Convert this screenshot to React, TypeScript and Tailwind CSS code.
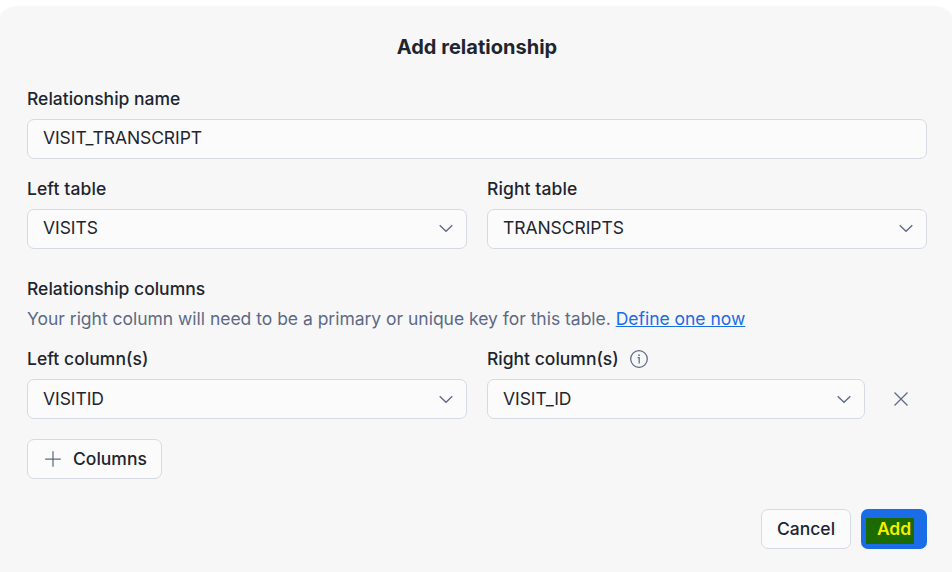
import type { ReactNode } from "react";

function Chevron() {
  return (
    <svg width="20" height="20" viewBox="0 0 20 20" fill="none" stroke="#5d6a85" strokeWidth="1.3" className="shrink-0">
      <path d="M3.7 6.2 10 12.3 16.3 6.2" />
    </svg>
  );
}

function Label({ children }: { children: ReactNode }) {
  return <div className="flex h-5 items-center font-medium whitespace-nowrap">{children}</div>;
}

function Select({ value, low = false }: { value: string; low?: boolean }) {
  return (
    <button className="flex h-10 w-full items-center justify-between rounded-[7px] border border-[#d5dae4] bg-[#fbfbfb] pr-[10px] pl-[15px] text-left tracking-[-0.06px]">
      <span className={low ? "" : "pb-[2px]"}>{value}</span>
      <span className={low ? "pt-[1px]" : "pb-[1px]"}>
        <Chevron />
      </span>
    </button>
  );
}

export default function App() {
  return (
    <div className="h-[572px] w-[952px] overflow-hidden bg-white pt-[6px] font-['Inter',sans-serif] text-[17.5px] leading-5 text-[#1e252f]">
      <div className="-mx-[3px] h-[566px] rounded-t-[20px] bg-[#f7f7f7] pt-[28px] pr-[28px] pl-[30px]">
        <h1 className="h-[26px] text-center text-[20px] leading-[26px] font-bold tracking-[0.02px]">Add relationship</h1>

        <div className="mt-[29px]">
          <Label>Relationship name</Label>
          <div className="mt-[10px] flex h-10 items-center rounded-[7px] border border-[#d5dae4] bg-[#fbfbfb] px-[15px] pb-[2px] tracking-[-0.08px]">
            VISIT_TRANSCRIPT
          </div>
        </div>

        <div className="mt-5 grid grid-cols-2 gap-5">
          <div className="flex flex-col gap-[10px]">
            <Label>
              <span className="tracking-[0.1px]">Left table</span>
            </Label>
            <Select value="VISITS" />
          </div>
          <div className="flex flex-col gap-[10px]">
            <Label>
              <span className="tracking-[0.1px]">Right table</span>
            </Label>
            <Select value="TRANSCRIPTS" />
          </div>
        </div>

        <div className="mt-[30px]">
          <Label>Relationship columns</Label>
          <p className="mt-[10px] tracking-[-0.018px] whitespace-nowrap text-[#5d6a85]">
            Your right column will need to be a primary or unique key for this table.{" "}
            <a className="text-[#1a6ce7] underline">Define one now</a>
          </p>
        </div>

        <div className="mt-5 grid grid-cols-2 gap-5">
          <div className="flex flex-col gap-[10px]">
            <Label>
              <span className="tracking-[0.05px]">Left column(s)</span>
            </Label>
            <Select value="VISITID" low />
          </div>
          <div className="flex flex-col gap-[10px]">
            <Label>
              Right column(s)
              <svg width="20" height="20" viewBox="0 0 20 20" fill="none" stroke="#5d6a85" strokeWidth="1.25" className="ml-[10px]">
                <circle cx="10" cy="10" r="8.3" />
                <path d="M8.6 8.6H10.2V14.4" />
                <circle cx="10" cy="6.2" r="0.85" fill="#5d6a85" stroke="none" />
              </svg>
            </Label>
            <div className="flex">
              <div className="w-[378px]">
                <Select value="VISIT_ID" low />
              </div>
              <button className="flex h-10 flex-1 items-center justify-center pl-[10px]">
                <svg width="20" height="20" viewBox="0 0 20 20" fill="none" stroke="#5d6a85" strokeWidth="1.3">
                  <path d="M3.5 3.5 16.5 16.5M16.5 3.5 3.5 16.5" />
                </svg>
              </button>
            </div>
          </div>
        </div>

        <button className="mt-5 flex h-10 w-[135px] items-center rounded-[7px] border border-[#d5dae4] bg-[#fbfbfb] pl-[15px] font-medium">
          <svg width="20" height="20" viewBox="0 0 20 20" fill="none" stroke="#5d6a85" strokeWidth="1.25" className="mr-[10px]">
            <path d="M10 2.2V17.8M2.2 10H17.8" />
          </svg>
          Columns
        </button>

        <div className="mt-[30px] flex justify-end gap-[10px]">
          <button className="h-10 w-[90px] rounded-[7px] border border-[#d5dae4] bg-[#fbfbfb] font-medium">Cancel</button>
          <button className="flex h-10 w-[66px] items-start rounded-[7px] bg-[#1a6ce7] pt-[9px] pl-[5px]">
            <span className="h-[26px] w-12 bg-[#1b6b02] pl-[11px] text-left leading-[22px] font-semibold tracking-[-0.1px] text-[#f5f000]">Add</span>
          </button>
        </div>
      </div>
    </div>
  );
}
